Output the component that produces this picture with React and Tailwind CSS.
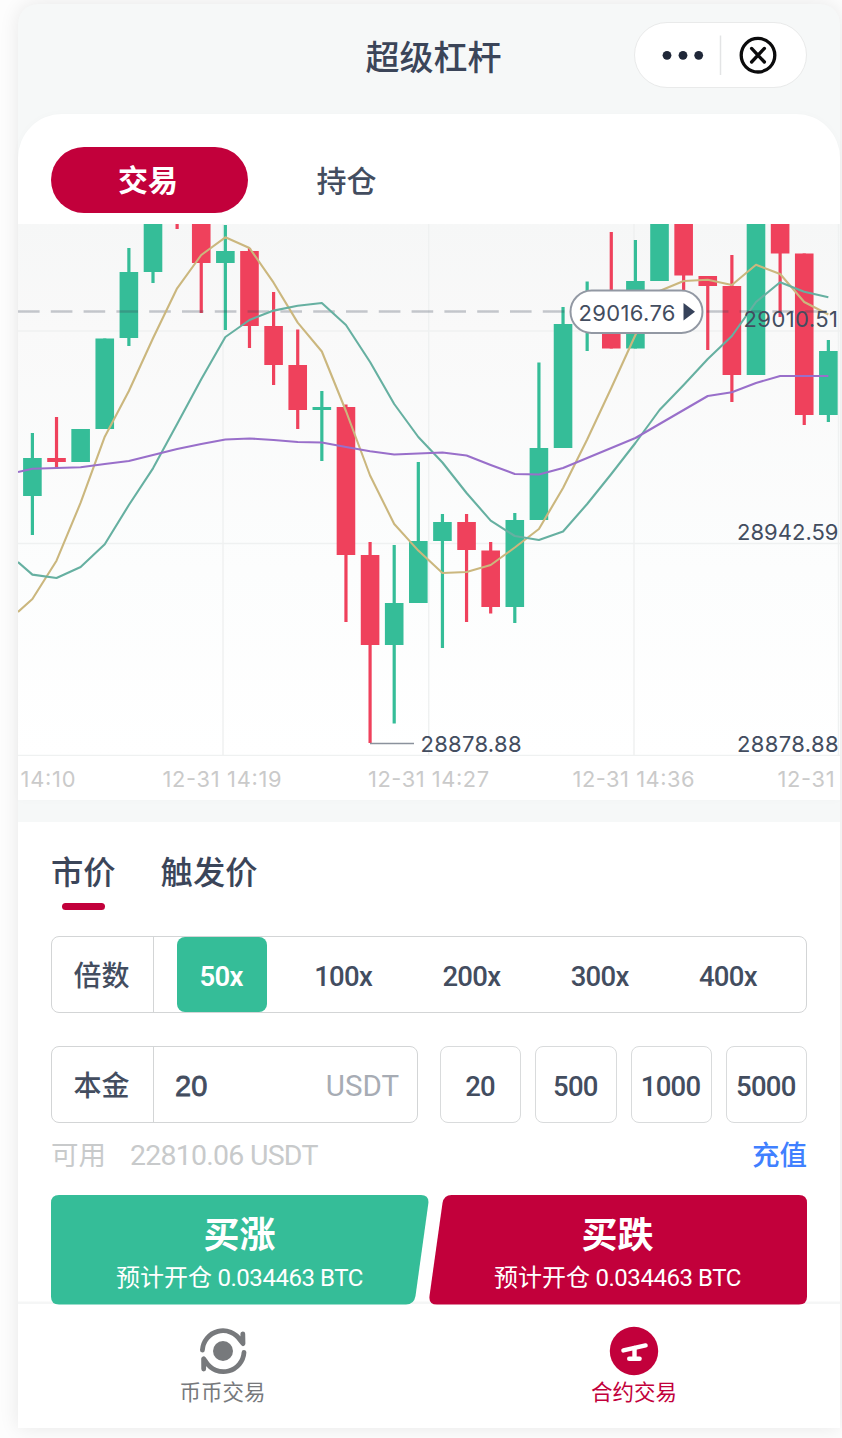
import React from "react";

const UP = "#35bd98";
const DOWN = "#ef415c";

// [bodyTop, bodyBottom, wickTop, wickBottom, rising]
const candles = [
  [458, 496, 433, 535, 1],
  [458, 462, 417, 469, 0],
  [429, 462, 429, 462, 1],
  [338.5, 429, 338.5, 429, 1],
  [272, 338, 248, 346, 1],
  [200, 272, 200, 283, 1],
  [200, 210, 200, 229, 0],
  [200, 263, 200, 313, 0],
  [251, 263, 225, 330, 1],
  [251, 326, 248, 348, 0],
  [326, 365, 292, 385, 0],
  [365, 410, 329.5, 429, 0],
  [407, 410, 391, 461, 1],
  [407, 555, 404.5, 622, 0],
  [555, 645, 542, 743, 0],
  [603, 645, 545, 723.5, 1],
  [541, 603, 462, 603, 1],
  [522, 541, 514, 648, 1],
  [522, 550, 514, 622, 0],
  [550.5, 607, 542, 613.5, 0],
  [520, 607, 513, 623, 1],
  [448, 520, 362.5, 520, 1],
  [324, 448, 307, 448, 1],
  [300, 325, 281.5, 351, 1],
  [300, 348.5, 232, 348.5, 0],
  [281, 348.5, 240, 348.5, 1],
  [200, 281, 200, 281, 1],
  [200, 275.5, 200, 300, 0],
  [276, 286, 276, 350, 0],
  [286, 375, 255, 402, 0],
  [200, 375, 200, 375, 1],
  [200, 253.5, 200, 317, 0],
  [253.5, 415, 253.5, 425, 0],
  [351, 415, 340, 422, 1],
];

const gold = [599, 560.7, 502.7, 436.7, 391, 338.3, 288.3, 255, 237.3, 248, 282.7, 322.6, 351.5, 411, 475.5, 524, 550.6, 573, 572, 565, 547.5, 529, 488, 439.5, 388, 335, 291, 281, 279.7, 285, 264.7, 274, 302, 314.5];
const teal = [574.6, 578, 567, 544.3, 505, 468.3, 424, 379.3, 337, 320, 310.6, 305.7, 303, 325, 362, 404, 437, 462.5, 493, 520.6, 536, 540, 531.5, 504, 474, 443, 410, 385, 359, 336, 302, 282.3, 291.7, 297.3];
const purple = [468.7, 468, 467.2, 464, 461, 455, 449, 444, 439.5, 438.5, 440, 442, 442.5, 447, 451.2, 454.5, 453.5, 452.5, 455.5, 465, 474, 474.5, 468, 458, 448, 438, 424, 410, 396, 392.3, 383, 376, 376, 376];

const cx = (i) => 32.4 + 24.12 * i;
const line = (start, ys) => `18,${start} ` + ys.map((y, i) => `${cx(i)},${y}`).join(" ");

function Chart() {
  return (
    <svg className="block h-[532px] w-full" viewBox="18 224 822 532" fontFamily="Inter, sans-serif" fontSize="22" fill="#434d5f">
      <defs>
        <linearGradient id="chartBg" x1="0" y1="0" x2="0" y2="1">
          <stop offset="0" stopColor="#f6f7f7" />
          <stop offset="0.2" stopColor="#f9f9f9" />
          <stop offset="0.65" stopColor="#fcfdfd" />
          <stop offset="1" stopColor="#ffffff" />
        </linearGradient>
      </defs>
      <rect x="18" y="224" width="822" height="532" fill="url(#chartBg)" />
      <g stroke="#eff1f1" strokeWidth="1.5">
        <path d="M18 331H840M18 543.5H840M18 755.5H840M223 224V756M428.7 224V756M634 224V756M838.5 224V756" />
      </g>
      {candles.map(([t, b, wt, wb, up], i) => (
        <g key={i} fill={up ? UP : DOWN}>
          <rect x={cx(i) - 1.6} y={wt} width="3.2" height={wb - wt} />
          <rect x={cx(i) - 9.3} y={t} width="18.6" height={b - t} />
        </g>
      ))}
      <path d="M18 311.5H838" stroke="#3a4356" strokeOpacity="0.28" strokeWidth="2.4" strokeDasharray="21.6 11.2" />
      <g fill="none" strokeWidth="2.1" strokeLinejoin="round">
        <polyline points={line(612, gold)} stroke="#cbb77e" />
        <polyline points={line(562, teal)} stroke="#66b0a1" />
        <polyline points={line(472, purple)} stroke="#996fca" />
      </g>
      <path d="M370 743.5H414" stroke="#8b929d" strokeWidth="1.3" />
      <text x="420.5" y="751.6" textLength="101">28878.88</text>
      <text x="737" y="751.6" textLength="101.5">28878.88</text>
      <text x="737" y="539.6" textLength="101.5">28942.59</text>
      <text x="743.5" y="326.6" textLength="94.5">29010.51</text>
      <rect x="570.5" y="290.5" width="132" height="42.5" rx="21.2" fill="#fff" stroke="#9298a3" strokeWidth="2" />
      <text x="578.5" y="320.8" textLength="97">29016.76</text>
      <path d="M683.5 303L695 311.7L683.5 320.5Z" fill="#36425a" />
    </svg>
  );
}

function Header() {
  return (
    <header className="relative flex h-[110px] items-start justify-center pt-[26px]">
      <h1 className="pl-[9px] text-[34px] leading-[52px] font-medium text-[#3b4559]">超级杠杆</h1>
      <div className="absolute top-[18px] right-[33px] flex h-[66px] w-[173px] items-center rounded-full border border-[#e9eaea] bg-white">
        <svg className="h-[64px] w-[171px]" viewBox="635 23 171 64">
          <g fill="#1f2738">
            <circle cx="667" cy="55.3" r="4.4" />
            <circle cx="683" cy="55.3" r="4.4" />
            <circle cx="698.7" cy="55.3" r="4.4" />
          </g>
          <path d="M720.5 35.5V75" stroke="#e3e4e5" strokeWidth="1.5" />
          <g fill="none" stroke="#0b0b0c" strokeWidth="3.3" strokeLinecap="round">
            <circle cx="758" cy="55.2" r="16.8" />
            <path d="M751.6 48.4L764.4 62M764.4 48.4L751.6 62" />
          </g>
        </svg>
      </div>
    </header>
  );
}

function Multiplier() {
  return (
    <div className="flex h-[77px] rounded-lg border-[1.5px] border-[#d3d5d6] text-[27.5px] font-medium text-[#434d5f]">
      <div className="flex w-[102px] items-center justify-center border-r-[1.5px] border-[#d3d5d6] pr-0.5 pb-0.5 text-[28px]">倍数</div>
      <div className="flex flex-1 items-center pl-[23px] font-[Roboto] tracking-[-0.7px]">
        <div className="flex h-[75px] w-[90px] items-center justify-center rounded-lg bg-[#35bd98] pt-1 pr-0.5 font-semibold text-white">50x</div>
        <div className="ml-[12px] grid flex-1 grid-cols-4 pt-1 pr-[14px] text-center">
          <span>100x</span>
          <span>200x</span>
          <span>300x</span>
          <span>400x</span>
        </div>
      </div>
    </div>
  );
}

function Principal() {
  return (
    <div className="mt-[33px] flex h-[77px] items-stretch justify-between text-[27.5px] font-medium text-[#434d5f]">
      <div className="flex w-[367px] rounded-lg border-[1.5px] border-[#d3d5d6]">
        <div className="flex w-[102px] items-center justify-center border-r-[1.5px] border-[#d3d5d6] pr-0.5 pb-0.5 text-[28px]">本金</div>
        <div className="flex flex-1 items-center justify-between pt-1 pr-[18px] pl-[21px]">
          <span className="font-['Liberation_Sans'] text-[29px] font-normal [-webkit-text-stroke:0.8px_#434d5f]">20</span>
          <span className="font-[Roboto] text-[29.5px] font-normal text-[#a7acb4]">USDT</span>
        </div>
      </div>
      <div className="grid w-[367px] grid-cols-4 gap-[14px] font-[Roboto] tracking-[-0.7px]">
        {["20", "500", "1000", "5000"].map((v) => (
          <div key={v} className="flex items-center justify-center rounded-lg border-[1.5px] border-[#d9dbdc] pt-1 pr-px">{v}</div>
        ))}
      </div>
    </div>
  );
}

function TradeButton({ title, shape, fill }) {
  return (
    <button className="relative h-[110px] w-[378px] text-white">
      <svg className="absolute inset-0 h-full w-full" viewBox="0 0 378 110">
        <path d={shape} fill={fill} />
      </svg>
      <span className="relative flex flex-col items-center pr-px">
        <span className="pt-px text-[36px] leading-[46px] font-bold">{title}</span>
        <span className="pt-[6px] text-[24px] leading-[30px] font-normal">
          预计开仓 <span className="font-[Roboto] tracking-[-0.45px]">0.034463 BTC</span>
        </span>
      </span>
    </button>
  );
}

function BottomNav() {
  return (
    <nav className="grid h-[124px] grid-cols-2 bg-white text-[21.5px] leading-[30px]">
      <a className="flex flex-col items-center pt-[22px] pr-[2px] text-[#77797c]">
        <svg className="h-[50px] w-[50px]" viewBox="198 1326 50 50">
          <circle cx="223" cy="1351" r="10" fill="#77797c" />
          <g fill="none" stroke="#77797c" strokeWidth="4.8" strokeLinecap="round" strokeLinejoin="round">
            <path d="M202.4 1350.2A20.6 20.6 0 0 1 240.5 1340.5L243 1343.6L242.8 1333.8" />
            <path d="M244 1352.4A20.6 20.6 0 0 1 206 1362L203.6 1358.8L203.7 1369" />
          </g>
        </svg>
        <span>币币交易</span>
      </a>
      <a className="flex flex-col items-center pt-[22px] pr-px text-[#c2003b]">
        <svg className="h-[50px] w-[50px]" viewBox="609 1326 50 50">
          <circle cx="634" cy="1351" r="24.2" fill="#c2003b" />
          <g stroke="#fff" strokeWidth="4.4" strokeLinecap="round">
            <path d="M623.4 1350.4L645.6 1345.4" />
            <path d="M634.5 1348V1358.5" />
            <path d="M629.2 1358.8H639.6" />
          </g>
        </svg>
        <span>合约交易</span>
      </a>
    </nav>
  );
}

export default function App() {
  return (
    <div className="h-[1438px] w-[842px] overflow-hidden bg-[#fdfdfd] pt-1 pl-[18px] font-['Noto_Sans_CJK_SC',sans-serif]">
      <div className="flex h-[1424px] w-[822px] flex-col rounded-t-[20px] bg-[#f6f8f8] shadow-[0_0_20px_rgba(0,0,0,0.09)]">
        <Header />
        <main className="flex flex-1 flex-col">
          <section className="rounded-t-[44px] bg-white shadow-[0_0_10px_rgba(0,0,0,0.02)]">
            <div className="flex h-[110px] items-end pb-[11px] pl-[33px] text-[30px]">
              <button className="h-[66px] w-[197px] rounded-full bg-[#c2003b] pr-[3px] pb-[3px] font-bold text-white">交易</button>
              <button className="h-[66px] w-[197px] pb-0.5 font-medium text-[#434d5f]">持仓</button>
            </div>
            <Chart />
            <svg className="block h-[44px] w-full" viewBox="18 756 822 44" fontFamily="Inter, sans-serif" fontSize="21.8" fill="#cacaca">
              <text x="20.5" y="786.7" textLength="55">14:10</text>
              <text x="162.5" y="786.7" textLength="119">12-31 14:19</text>
              <text x="368" y="786.7" textLength="121">12-31 14:27</text>
              <text x="572.5" y="786.7" textLength="122">12-31 14:36</text>
              <text x="777.5" y="786.7" textLength="57">12-31</text>
            </svg>
          </section>
          <section className="mt-[22px] flex h-[482px] flex-col bg-white px-[33px]">
            <div className="flex h-[114px] gap-[45px] pt-[24px] text-[32.3px] leading-[48px] font-medium text-[#3b4559]">
              <div className="flex flex-col items-center">
                <span>市价</span>
                <span className="mt-[9px] h-[6.5px] w-[43px] rounded-full bg-[#c2003b]" />
              </div>
              <span>触发价</span>
            </div>
            <Multiplier />
            <Principal />
            <div className="flex h-[72px] items-start justify-between pt-[9px] text-[27.5px] leading-[42px] text-[#c8cacb]">
              <div className="flex gap-[24px]">
                <span>可用</span>
                <span className="pt-[3px] font-[Roboto] text-[28.5px] font-normal tracking-[-0.75px]">22810.06 USDT</span>
              </div>
              <span className="font-medium text-[#4080ff]">充值</span>
            </div>
            <div className="-mx-[33px] h-[109px] bg-[linear-gradient(to_bottom,#fff_106px,#f5f6f6_107px)] px-[33px]">
              <div className="flex">
                <TradeButton title="买涨" fill={UP} shape="M8 0H370Q378 0 377.4 8L364.5 101Q363 109.5 355 109.5H8Q0 109.5 0 101.5V8Q0 0 8 0Z" />
                <TradeButton title="买跌" fill="#c2003b" shape="M22.5 0H370Q378 0 378 8V101.5Q378 109.5 370 109.5H8Q-0.5 109.5 0.5 101L13.5 8Q15 0 22.5 0Z" />
              </div>
            </div>
          </section>
          <BottomNav />
        </main>
      </div>
    </div>
  );
}
